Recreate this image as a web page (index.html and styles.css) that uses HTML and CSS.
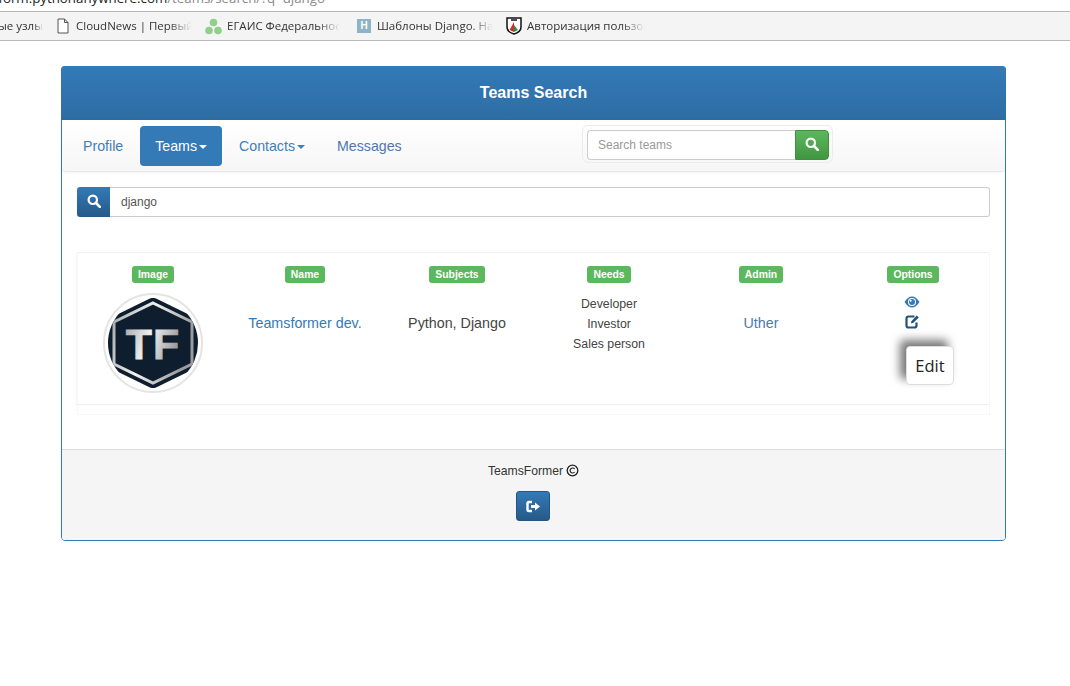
FILE: index.html
```html
<!DOCTYPE html>
<html lang="en">
<head>
  <meta charset="UTF-8" />
  <title>Teams Search</title>
  <link rel="stylesheet" href="styles.css">
</head>
<body>
  <div class="urlbar"><span class="url"><span class="url-host">rform.pythonanywhere.com</span>/teams/search/?q=django</span></div>
  <div class="bookmarks">
    <span class="mark mark-first"><span class="mark-text">ые узлы</span></span>
    <span class="mark mark-cloud">
      <svg class="mark-icon" width="12" height="16" viewBox="0 0 12 16"><path d="M1 1h6.500L11 4.500V15H1z M7.500 1v3.500H11" fill="#fff" stroke="#555" stroke-width="1"/></svg>
      <span class="mark-text">CloudNews | Первый</span>
    </span>
    <span class="mark mark-egais">
      <svg class="mark-icon" width="17" height="17" viewBox="0 0 17 17"><circle cx="8.500" cy="4.500" r="3.800" fill="#8fd08a"/><circle cx="4" cy="12.500" r="3.800" fill="#8fd08a"/><circle cx="13" cy="12.500" r="3.800" fill="#8fd08a"/></svg>
      <span class="mark-text">ЕГАИС Федеральное</span>
    </span>
    <span class="mark mark-django">
      <span class="h-icon">H</span>
      <span class="mark-text">Шаблоны Django. На</span>
    </span>
    <span class="mark mark-auth">
      <svg class="mark-icon" width="16" height="18" viewBox="0 0 16 18"><path d="M1 1h14v9c0 4-3.500 6-7 7-3.500-1-7-3-7-7z" fill="#fff" stroke="#111" stroke-width="1.500"/><path d="M3.500 13L8 5v10z" fill="#c8322b"/><path d="M8 8l4 5-4 2z" fill="#2f8f46"/><path d="M5 3h6" stroke="#111" stroke-width="1.500"/></svg>
      <span class="mark-text">Авторизация пользов</span>
    </span>
  </div>

  <div class="page">
    <div class="panel">
      <div class="panel-heading">Teams Search</div>

      <div class="navbar">
        <ul class="nav">
          <li class="nav-item nav-profile">Profile</li>
          <li class="nav-item active">Teams<span class="caret"></span></li>
          <li class="nav-item nav-contacts">Contacts<span class="caret"></span></li>
          <li class="nav-item nav-messages">Messages</li>
        </ul>
        <div class="nav-search">
          <input class="nav-input" type="text" placeholder="Search teams">
          <button class="nav-btn">
            <svg width="14" height="14" viewBox="0 0 14 14"><circle cx="5.800" cy="5.800" r="4.200" fill="none" stroke="#fff" stroke-width="2.200"/><path d="M9 9l3.800 3.800" stroke="#fff" stroke-width="2.600" stroke-linecap="round"/></svg>
          </button>
        </div>
      </div>

      <div class="search-row">
        <span class="search-addon">
          <svg width="14" height="14" viewBox="0 0 14 14"><circle cx="5.800" cy="5.800" r="4.200" fill="none" stroke="#fff" stroke-width="2.200"/><path d="M9 9l3.800 3.800" stroke="#fff" stroke-width="2.600" stroke-linecap="round"/></svg>
        </span>
        <input class="search-input" type="text" value="django">
      </div>

      <div class="results">
        <div class="results-grid">
          <div class="col">
            <span class="label">Image</span>
            <span class="avatar">
              <svg width="92" height="92" viewBox="0 0 92 92">
                <defs>
                  <linearGradient id="metal" x1="0" y1="0" x2="1" y2="0.300">
                    <stop offset="0" stop-color="#a5a7a9"/>
                    <stop offset="0.500" stop-color="#f2f2f2"/>
                    <stop offset="1" stop-color="#9a9c9f"/>
                  </linearGradient>
                  <clipPath id="round"><circle cx="46" cy="46" r="45"/></clipPath>
                </defs>
                <g clip-path="url(#round)">
                  <path d="M46 0L91 22V70L46 92L1 70V22z" fill="#0f1e2e"/>
                  <path d="M46 6L85 25V67L46 86L7 67V25z" fill="none" stroke="url(#metal)" stroke-width="3"/>
                </g>
                <text class="logo-text" x="46" y="62" fill="url(#metal)" stroke="url(#metal)">TF</text>
              </svg>
            </span>
          </div>
          <div class="col">
            <span class="label">Name</span>
            <div class="cell"><a class="link">Teamsformer dev.</a></div>
          </div>
          <div class="col">
            <span class="label">Subjects</span>
            <div class="cell">Python, Django</div>
          </div>
          <div class="col">
            <span class="label">Needs</span>
            <div class="cell needs">
              <div>Developer</div>
              <div>Investor</div>
              <div>Sales person</div>
            </div>
          </div>
          <div class="col">
            <span class="label">Admin</span>
            <div class="cell"><a class="link admin">Uther</a></div>
          </div>
          <div class="col col-options">
            <span class="label">Options</span>
            <div class="options">
              <svg width="16" height="12" viewBox="0 0 16 12"><path d="M0.500 6C3 2 5.500 0.500 8 0.500S13 2 15.500 6C13 10 10.500 11.500 8 11.500S3 10 0.500 6z" fill="#337ab7"/><circle cx="8" cy="6" r="4" fill="#fff"/><circle cx="8" cy="6" r="3" fill="#337ab7"/><circle cx="6.700" cy="4.800" r="1" fill="#fff"/></svg>
              <svg width="15" height="15" viewBox="0 0 15 15"><path d="M9.500 2.500H3.500Q1.500 2.500 1.500 4.500V11.500Q1.500 13.500 3.500 13.500H9.500Q11.500 13.500 11.500 11.500V8.500" fill="none" stroke="#23527c" stroke-width="2.200"/><path d="M6 9.300L6.300 7.200L11.800 1.500L13.800 3.500L8.200 9.100z" fill="#23527c"/></svg>
            </div>
            <div class="tooltip">Edit</div>
          </div>
        </div>
      </div>

      <div class="panel-footer">
        <div class="copy">TeamsFormer <svg class="copy-icon" width="13" height="13" viewBox="0 0 13 13"><circle cx="6.500" cy="6.500" r="5.300" fill="none" stroke="#222" stroke-width="1.300"/><path d="M8.600 5A2.500 2.500 0 1 0 8.600 8" fill="none" stroke="#222" stroke-width="1.200"/></svg></div>
        <button class="logout">
          <svg width="15" height="13" viewBox="0 0 15 13"><path d="M6 2H3Q1.500 2 1.500 3.500V9.500Q1.500 11 3 11H6" fill="none" stroke="#fff" stroke-width="2.400"/><path d="M5 5H9V2.500L14 6.500L9 10.500V8H5z" fill="#fff"/></svg>
        </button>
      </div>
    </div>
  </div>
</body>
</html>
```

FILE: styles.css
```css
* {
  box-sizing: border-box;
}
body {
  margin: 0;
  background: #fff;
  color: #333;
  font-family: "Liberation Sans", Arial, sans-serif;
  font-size: 14px;
}

/* browser chrome */
.urlbar {
  height: 12px;
  overflow: hidden;
  white-space: nowrap;
  border-bottom: 1px solid #b5b5b5;
  background: #fff;
  color: #8a8a8a;
  font-family: "Open Sans", sans-serif;
  font-size: 13.300px;
  line-height: 18px;
}
.url {
  display: block;
  margin: -11px 0 0 -7px;
}
.url-host {
  color: #222;
}
.bookmarks {
  display: flex;
  align-items: center;
  height: 29px;
  background: #f4f4f4;
  border-bottom: 1px solid #b9b9b9;
  overflow: hidden;
  white-space: nowrap;
  color: #333;
  font-family: "Open Sans", sans-serif;
  font-size: 11.500px;
}
.mark {
  display: flex;
  align-items: center;
  flex: none;
}
.mark-text {
  overflow: hidden;
  margin-top: -2px;
  -webkit-mask-image: linear-gradient(to right, #000 80%, transparent 100%);
  mask-image: linear-gradient(to right, #000 80%, transparent 100%);
}
.mark-first { width: 45px; }
.mark-first .mark-text { width: 45px; margin-left: -2px; }
.mark-cloud { width: 148px; margin-left: 12px; }
.mark-cloud .mark-icon { margin-right: 7px; }
.mark-cloud .mark-text { width: 116px; }
.mark-egais { width: 151px; }
.mark-egais .mark-text { width: 113px; margin-left: 5px; }
.mark-django { width: 149px; margin-left: 1px; }
.mark-django .mark-text { width: 116px; margin-left: 6px; }
.mark-auth .mark-text { width: 118px; margin-left: 5px; }
.h-icon {
  width: 14px;
  height: 14px;
  background: #8db4c4;
  color: #fff;
  font-family: "Liberation Sans", sans-serif;
  font-size: 10px;
  font-weight: bold;
  line-height: 14px;
  text-align: center;
}

/* panel */
.page {
  padding: 25px 64px 0 61px;
}
.panel {
  border: 1px solid #337ab7;
  border-radius: 4px;
  background: #fff;
}
.panel-heading {
  height: 54px;
  margin: -1px -1px 0;
  border-radius: 4px 4px 0 0;
  background: linear-gradient(to bottom, #337ab7 0%, #2e6da4 100%);
  color: #fff;
  font-size: 16px;
  font-weight: bold;
  line-height: 54px;
  text-align: center;
}

/* navbar */
.navbar {
  display: flex;
  justify-content: space-between;
  height: 52px;
  padding: 6px 172px 0 6px;
  border-bottom: 1px solid #e7e7e7;
  border-radius: 0 0 4px 4px;
  background: linear-gradient(to bottom, #fff 0%, #f6f6f6 100%);
  box-shadow: 0 1px 3px rgba(0, 0, 0, 0.05);
}
.nav {
  display: flex;
  margin: 0;
  padding: 0;
  list-style: none;
  font-size: 14.200px;
}
.nav-item {
  height: 40px;
  padding: 0 15px;
  border-radius: 4px;
  color: #3f7fba;
  line-height: 40px;
}
.nav-item.active {
  margin: 0 2px;
  background: #337ab7;
  color: #fff;
}
.nav-messages {
  padding-left: 17px;
  color: #4f77ad;
}
.caret {
  display: inline-block;
  margin-left: 2px;
  vertical-align: middle;
  border-top: 4px solid;
  border-left: 4px solid transparent;
  border-right: 4px solid transparent;
}
.nav-search {
  display: flex;
  height: 38px;
  padding: 4px 3px 4px 4px;
  margin-top: -1px;
  border: 1px solid #ececec;
  border-radius: 6px;
}
.nav-input {
  width: 208px;
  height: 30px;
  padding: 0 10px;
  border: 1px solid #ccc;
  border-right: 0;
  border-radius: 4px 0 0 4px;
  font-family: inherit;
  font-size: 12px;
}
.nav-input::placeholder {
  color: #999;
}
.nav-btn {
  display: flex;
  align-items: center;
  justify-content: center;
  width: 34px;
  height: 30px;
  padding: 0 0 3px;
  border: 1px solid #3e8f3e;
  border-radius: 0 4px 4px 0;
  background: linear-gradient(to bottom, #5cb85c 0%, #419641 100%);
}

/* search row */
.search-row {
  display: flex;
  height: 30px;
  margin: 15px 15px 0;
}
.search-addon {
  display: flex;
  align-items: center;
  justify-content: center;
  width: 33px;
  padding-bottom: 3px;
  border-radius: 3px 0 0 3px;
  background: linear-gradient(to bottom, #337ab7 0%, #265a88 100%);
}
.search-input {
  flex: 1;
  height: 30px;
  padding: 0 11px;
  border: 1px solid #ccc;
  border-left: 0;
  border-radius: 0 3px 3px 0;
  color: #555;
  font-family: inherit;
  font-size: 12px;
}

/* results */
.results {
  height: 163px;
  margin: 35px 15px 0;
  border: 1px solid #f7f7f7;
  border-top-color: #f2f2f2;
}
.results-grid {
  display: grid;
  grid-template-columns: repeat(6, 1fr);
  height: 152px;
  margin: 0 0 0 -1px;
  padding-top: 13px;
  border-bottom: 1px solid #f0f0f0;
  box-shadow: -1px 0 1px rgba(0, 0, 0, 0.03);
}
.col {
  position: relative;
  display: flex;
  flex-direction: column;
  align-items: center;
}
.label {
  height: 17px;
  padding: 0 6px;
  border-radius: 3px;
  background: #5cb85c;
  color: #fff;
  font-size: 10.400px;
  font-weight: bold;
  line-height: 17px;
}
.avatar {
  display: block;
  width: 100px;
  height: 100px;
  margin-top: 10px;
  padding: 2px;
  border: 2px solid #e4e4e4;
  border-radius: 50%;
  background: #fff;
}
.logo-text {
  font-family: "Liberation Sans", sans-serif;
  font-size: 43px;
  font-weight: bold;
  stroke-width: 0.800px;
  letter-spacing: 1px;
  text-anchor: middle;
}
.cell {
  display: flex;
  align-items: center;
  justify-content: center;
  height: 60px;
  margin-top: 10px;
  font-size: 14.300px;
  color: #444;
}
.needs {
  flex-direction: column;
  padding-top: 1px;
  font-size: 12.300px;
  line-height: 20px;
}
.link {
  color: #337ab7;
}
.admin {
  color: #4f77ad;
}
.options {
  display: flex;
  flex-direction: column;
  align-items: center;
  gap: 6px;
  margin: 13px 2px 0 0;
}
.tooltip {
  position: absolute;
  top: 80px;
  left: 69px;
  width: 48px;
  height: 39px;
  border: 1px solid #ddd;
  border-radius: 4px;
  background: #fff;
  box-shadow: -6px -6px 10px #777;
  color: #222;
  font-family: "Open Sans", sans-serif;
  font-size: 16.500px;
  line-height: 37px;
  text-align: center;
}

/* footer */
.panel-footer {
  display: flex;
  flex-direction: column;
  align-items: center;
  height: 91px;
  margin-top: 34px;
  padding-top: 13px;
  border-top: 1px solid #ddd;
  border-radius: 0 0 3px 3px;
  background: #f5f5f5;
}
.copy {
  display: flex;
  align-items: center;
  gap: 3px;
  height: 15px;
  font-size: 12.200px;
}
.logout {
  display: flex;
  align-items: center;
  justify-content: center;
  width: 34px;
  height: 30px;
  margin: 13px 1px 0 0;
  padding: 0;
  border: 1px solid #245580;
  border-radius: 3px;
  background: linear-gradient(to bottom, #337ab7 0%, #265a88 100%);
}
```
